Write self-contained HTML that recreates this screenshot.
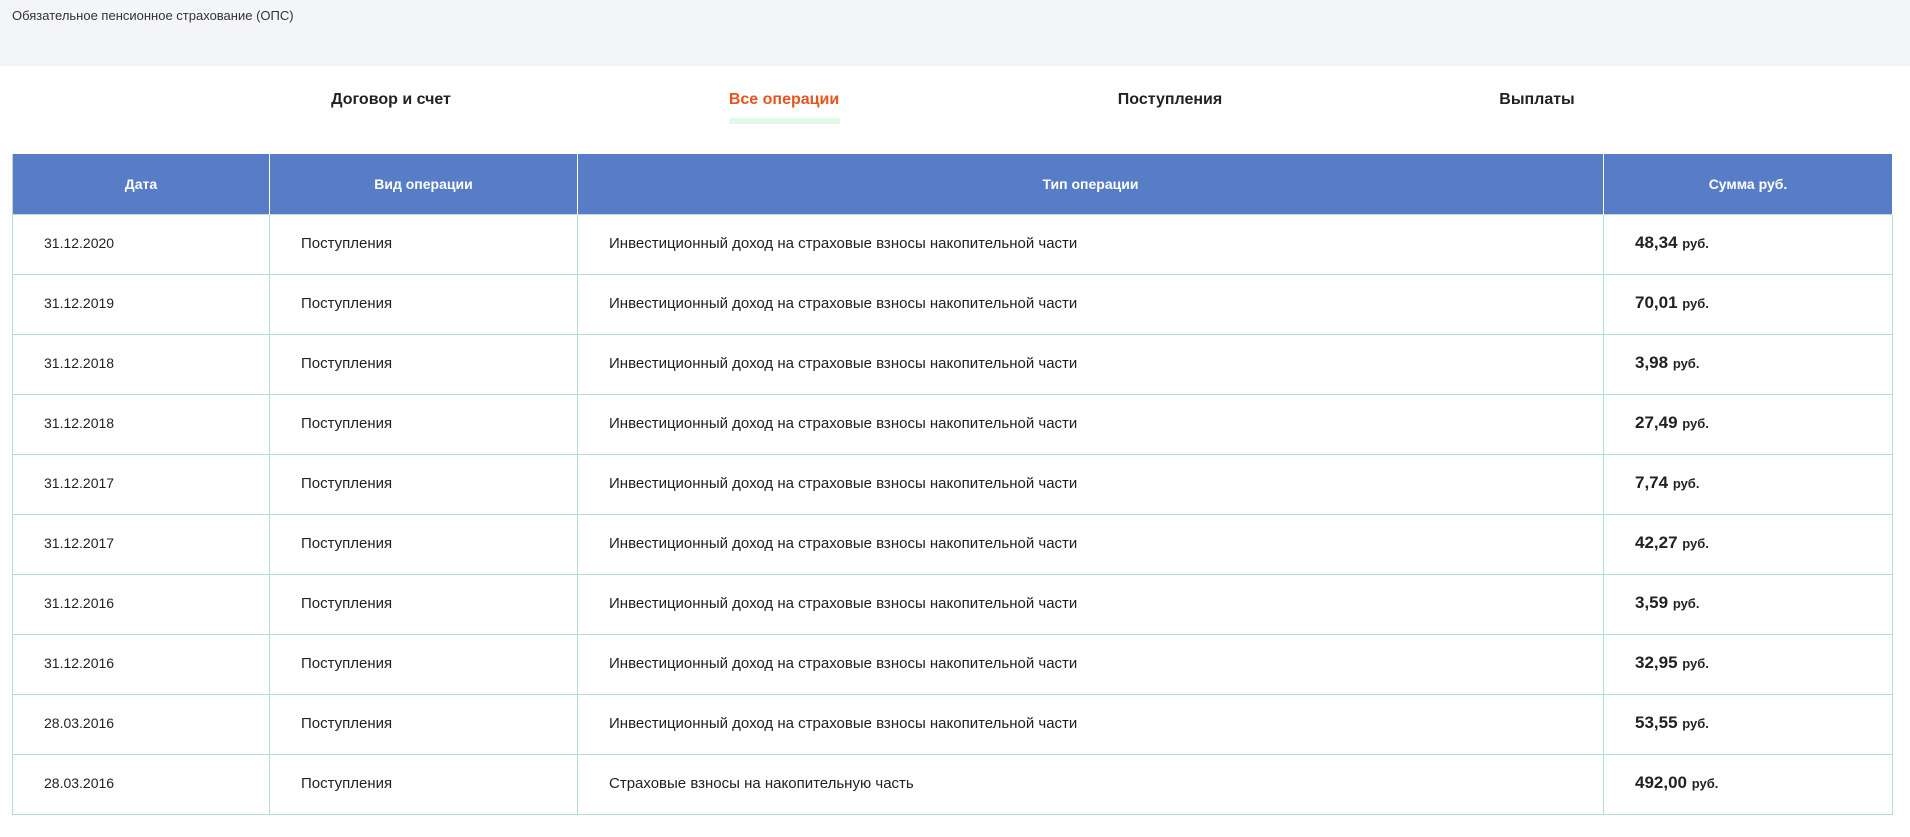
<!DOCTYPE html>
<html><head><meta charset="utf-8"><style>
body{margin:0;width:1910px;height:837px;background:#fff;font-family:"Liberation Sans","Noto Sans CJK SC",sans-serif;color:#222;overflow:hidden;position:relative}
.top{position:absolute;left:0;top:0;width:1910px;height:66px;background:#f4f5f7}
.top span{position:absolute;left:12px;top:8px;font-size:13px;color:#333}
.tab{position:absolute;top:91px;font-size:16px;font-weight:bold;transform:translateX(-50%);white-space:nowrap;color:#222}
.act{color:#e8531e}
.ul{position:absolute;left:729px;top:118px;width:111px;height:6px;background:#e3f8e6}
table{position:absolute;left:12px;top:154px;border-collapse:collapse;table-layout:fixed;width:1880px}
th{background:#567dc5;color:#fff;font-size:14px;font-weight:bold;height:60px;padding:0;border-left:1px solid #fff;border-right:1px solid #fff}
th:first-child{border-left:1px solid #b5dcd5}
td{height:56px;border:1px solid #b5dcd5;font-size:15px;padding:0 0 3px 31px;color:#222}
td:first-child{font-size:14px}
.s{font-size:17px;font-weight:bold;color:#222}
.s small{font-size:13px}
</style></head><body>
<div class="top"><span>Обязательное пенсионное страхование (ОПС)</span></div>
<div class="tab" style="left:391px">Договор и счет</div>
<div class="tab act" style="left:784px">Все операции</div>
<div class="ul"></div>
<div class="tab" style="left:1170px">Поступления</div>
<div class="tab" style="left:1537px">Выплаты</div>
<table>
<colgroup><col style="width:257px"><col style="width:308px"><col style="width:1026px"><col style="width:289px"></colgroup>
<tr><th>Дата</th><th>Вид операции</th><th>Тип операции</th><th>Сумма руб.</th></tr>
<tr><td>31.12.2020</td><td>Поступления</td><td>Инвестиционный доход на страховые взносы накопительной части</td><td class="s">48,34 <small>руб.</small></td></tr>
<tr><td>31.12.2019</td><td>Поступления</td><td>Инвестиционный доход на страховые взносы накопительной части</td><td class="s">70,01 <small>руб.</small></td></tr>
<tr><td>31.12.2018</td><td>Поступления</td><td>Инвестиционный доход на страховые взносы накопительной части</td><td class="s">3,98 <small>руб.</small></td></tr>
<tr><td>31.12.2018</td><td>Поступления</td><td>Инвестиционный доход на страховые взносы накопительной части</td><td class="s">27,49 <small>руб.</small></td></tr>
<tr><td>31.12.2017</td><td>Поступления</td><td>Инвестиционный доход на страховые взносы накопительной части</td><td class="s">7,74 <small>руб.</small></td></tr>
<tr><td>31.12.2017</td><td>Поступления</td><td>Инвестиционный доход на страховые взносы накопительной части</td><td class="s">42,27 <small>руб.</small></td></tr>
<tr><td>31.12.2016</td><td>Поступления</td><td>Инвестиционный доход на страховые взносы накопительной части</td><td class="s">3,59 <small>руб.</small></td></tr>
<tr><td>31.12.2016</td><td>Поступления</td><td>Инвестиционный доход на страховые взносы накопительной части</td><td class="s">32,95 <small>руб.</small></td></tr>
<tr><td>28.03.2016</td><td>Поступления</td><td>Инвестиционный доход на страховые взносы накопительной части</td><td class="s">53,55 <small>руб.</small></td></tr>
<tr><td>28.03.2016</td><td>Поступления</td><td>Страховые взносы на накопительную часть</td><td class="s">492,00 <small>руб.</small></td></tr>
</table>
</body></html>
